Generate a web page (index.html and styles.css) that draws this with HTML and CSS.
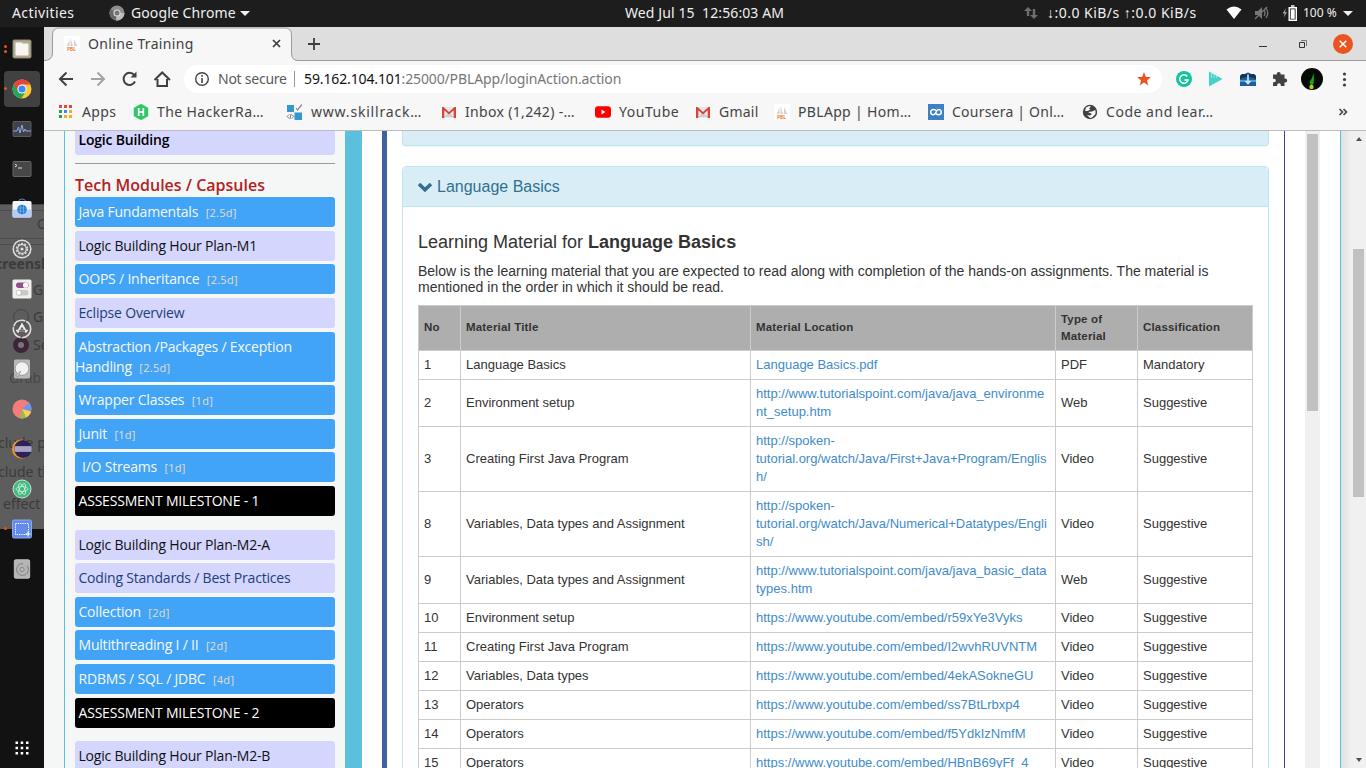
FILE: index.html
```html
<!DOCTYPE html>
<html lang="en">
<head>
<meta charset="utf-8">
<title>Online Training</title>
<link rel="stylesheet" href="styles.css">
</head>
<body>
<svg class="defs" width="0" height="0">
  <symbol id="gmail" viewBox="0 0 16 16"><path d="M1 3h14v11H1z" fill="#e8e8e8"/><path d="M3 13l5-5 5 5z" fill="#d0d0d0"/><path d="M1 3h1.6L8 8l5.4-5H15v11h-2.3V6.2L8 10.6 3.300 6.200V14H1z" fill="#d6453a"/></symbol>
  <symbol id="pbl" viewBox="0 0 16 16"><path d="M0 0h16v16H0z" fill="#fff"/><path d="M2.500 10l3-6v6zM6.500 10V2l2.500 8zM10 10V3l3.500 7z" fill="#d4d4d4"/><text x="3" y="15.300" font-size="4.800" font-weight="700" fill="#f47b35">PBL</text></symbol>
</svg>
<header class="topbar">
  <span class="activities">Activities</span>
  <svg class="tb-chrome" width="16" height="16" viewBox="0 0 16 16"><circle cx="8" cy="8" r="7.500" fill="#8d8d8d"/><path d="M8 8L1.500 4A7.500 7.500 0 0 0 7 15.400z" fill="#686868"/><path d="M8 8h7.500A7.500 7.500 0 0 1 7 15.400z" fill="#bcbcbc"/><circle cx="8" cy="8" r="3.600" fill="#ddd"/><circle cx="8" cy="8" r="2.500" fill="#777"/></svg>
  <span class="appname">Google Chrome</span><i class="caret"></i>
  <span class="clock">Wed Jul 15&nbsp; 12:56:03 AM</span>
  <svg class="net" width="14" height="14" viewBox="0 0 14 14" fill="#6f6f6c"><path d="M4 1l4 4H5.200v5H2.800V5H0zM10 13L6 9h2.800V3h2.400v6H14z"/></svg>
  <span class="speed"><b>↓</b>:0.0 KiB/s <b>↑</b>:0.0 KiB/s</span>
  <svg class="wifi" width="16" height="14" viewBox="0 0 16 14"><path d="M.5 3.500Q8-2.500 15.500 3.500L8 13z" fill="#fff"/></svg>
  <svg class="vol" width="16" height="14" viewBox="0 0 16 14"><path d="M1 5h3l4-4v12L4 9H1z" fill="#777"/><path d="M10 4q2 3 0 6M12 2q3.500 5 0 10M1 13L13 1" fill="none" stroke="#777" stroke-width="1.300"/></svg>
  <svg class="bat" width="16" height="16" viewBox="0 0 16 16"><path d="M4 3L0.500 8.500h2l-.500 4 3-5.500H3z" fill="#999"/><path d="M7.200 2.700h7.100v12.600H7.200zM9 1h3.500" fill="none" stroke="#fff" stroke-width="1.400"/><path d="M8.700 4.300h4v9.500h-4z" fill="#fff"/></svg>
  <span class="pct">100 %</span><i class="caret"></i>
</header>
<div class="desktop">
  <nav class="dock">
    <div class="ghost"><b class="g1">C</b><b class="g2">creensh</b><b class="g3">G</b><b class="g4">G</b><b class="g5">Se</b><b class="g6">Grab</b><b class="g7">clude p</b><b class="g8">clude th</b><b class="g9">effect</b><i class="radio"></i><i class="radio on"></i></div>
    <div class="app two"><svg viewBox="0 0 20 20"><rect x=".5" y=".5" width="19" height="19" rx="2" fill="#8c8671"/><rect x="1.500" y="1.500" width="17" height="17" rx="1" fill="#b2ab96"/><path d="M3.500 4.500q0-1 1-1h5l1 1h5q1 0 1 1v10q0 1-1 1h-11q-1 0-1-1z" fill="#f8f6f1"/></svg></div>
    <div class="app one active"><svg viewBox="0 0 20 20"><circle cx="10" cy="10" r="9.500" fill="#fbc934"/><path d="M10 10L1.800 5.200A9.500 9.500 0 0 0 9.300 19.500L14 12z" fill="#25a65a"/><path d="M10 5.500h8.300A9.500 9.500 0 0 0 1.800 5.200L6 12z" fill="#e5453a"/><circle cx="10" cy="10" r="4.600" fill="#fff"/><circle cx="10" cy="10" r="3.600" fill="#4587f0"/></svg></div>
    <div class="app"><svg viewBox="0 0 20 20"><rect x="1" y="2.500" width="18" height="15" rx="1" fill="#3f4247" stroke="#5a5a5a"/><path d="M1 12h4l1.500-4L8 14l2-8 1.500 7 1.500-3 1 2h5" fill="none" stroke="#8fa9e8"/></svg></div>
    <div class="app"><svg viewBox="0 0 20 20"><rect x="1" y="2.500" width="18" height="15" rx="1" fill="#474747" stroke="#666"/><path d="M3 5l2 1.500L3 8M6 9h4" fill="none" stroke="#ddd"/></svg></div>
    <div class="app"><svg viewBox="0 0 20 20"><path d="M6.500 2.500q0-2.500 3.500-2.500t3.500 2.500" fill="none" stroke="#5c7fcf"/><rect x=".5" y="2" width="19" height="16.500" rx="1.500" fill="#f4f6fb"/><path d="M.5 10.500h19v6.500q0 1.500-1.500 1.500H2q-1.500 0-1.500-1.500z" fill="#b7cbfa"/><circle cx="10" cy="10.500" r="4.800" fill="#2178cf"/><path d="M5.500 9h9M5.500 12h9M8.500 6v9M11.500 6v9" stroke="#77b9f2" stroke-width=".7"/></svg></div>
    <div class="app"><svg viewBox="0 0 20 20"><circle cx="10" cy="10" r="8.800" fill="#636363" stroke="#deded9" stroke-width="1.500"/><circle cx="10" cy="10" r="5.300" fill="none" stroke="#d8d8d8" stroke-width="1.800" stroke-dasharray="2 1.330"/><circle cx="10" cy="10" r="4.300" fill="none" stroke="#d8d8d8" stroke-width="1.200"/><circle cx="10" cy="10" r="1.600" fill="#ddd"/></svg></div>
    <div class="app"><svg viewBox="0 0 20 20"><rect x=".5" y=".5" width="19" height="19" rx="1.500" fill="#efefed"/><rect x="4" y="3.500" width="12.500" height="5.500" rx="2.750" fill="#924d8b"/><circle cx="13.500" cy="6.200" r="2.600" fill="#fff"/><rect x="4" y="11" width="12.500" height="5.500" rx="2.750" fill="#c9c9c7"/><circle cx="6.700" cy="13.700" r="2.600" fill="#fff" stroke="#999" stroke-width=".5"/></svg></div>
    <div class="app"><svg viewBox="0 0 20 20" fill="none"><circle cx="10" cy="10" r="8.700" stroke="#deded9" stroke-width="1.600" stroke-dasharray="14 1"/><path d="M5.500 13.500l4.500-8 4.500 8" stroke="#eee" stroke-width="2"/><path d="M4 11.500h12" stroke="#ddd" stroke-width="1.600"/><path d="M7 11.500h6" stroke="#a35b92"/></svg></div>
    <div class="app"><svg viewBox="0 0 20 20"><rect x="2" y=".5" width="16" height="19" rx="1.500" fill="#b9b9b9"/><circle cx="10" cy="9.500" r="6.800" fill="#f1f1f1" stroke="#888" stroke-width=".7"/><path d="M3.500 17l5-5-2 5z" fill="#eee" stroke="#777" stroke-width=".6"/></svg></div>
    <div class="app"><svg viewBox="0 0 20 20"><circle cx="10" cy="10" r="9.500" fill="#f47d7c"/><path d="M10 10l7-6.400a9.500 9.500 0 0 1 2 9z" fill="#6f95ed"/><path d="M10 10l9 2.600a9.500 9.500 0 0 1-5 6z" fill="#f8d04d"/><path d="M10 10l4 8.600a9.500 9.500 0 0 1-6 .700z" fill="#8cc152"/></svg></div>
    <div class="app"><svg viewBox="0 0 20 20"><circle cx="9.500" cy="10" r="9.500" fill="#f7941e"/><circle cx="11" cy="10" r="9" fill="#2c2255"/><path d="M2.500 7h17v6h-17z" fill="#9d95bb"/><path d="M2 9h18M2 11h18" stroke="#c7c2d9" stroke-width=".6"/></svg></div>
    <div class="app"><svg viewBox="0 0 20 20" fill="none"><circle cx="10" cy="10" r="9" fill="#43b87f" stroke="#c6e5d4"/><g stroke="#c9f3de" stroke-width=".8"><ellipse cx="10" cy="10" rx="6" ry="2.500"/><ellipse cx="10" cy="10" rx="6" ry="2.500" transform="rotate(60 10 10)"/><ellipse cx="10" cy="10" rx="6" ry="2.500" transform="rotate(120 10 10)"/></g></svg></div>
    <div class="app one"><svg viewBox="0 0 20 20"><rect x=".5" y="1" width="19" height="18" rx="1.500" fill="#648bea" stroke="#89a7f2"/><rect x="3.500" y="4.500" width="13" height="11" fill="none" stroke="#fff" stroke-dasharray="1.300 1"/><path d="M16 12.500v5M13.500 15h5" stroke="#fff"/></svg></div>
    <div class="app"><svg viewBox="0 0 20 20"><rect x="2.300" y=".7" width="15.400" height="18.600" rx="1.500" fill="#b5b5b5" stroke="#ddd" stroke-width=".7"/><path d="M15 6.500A6 6 0 1 1 11 4.500" fill="none" stroke="#808080"/><circle cx="10" cy="10.500" r="2.200" fill="none" stroke="#8a8a8a"/></svg></div>
    <svg class="grid" viewBox="0 0 14 14" fill="#fff"><path d="M.5.5h2.500v2.500H.5zM5.700.5h2.500v2.500H5.700zM11 .5h2.500v2.500H11zM.5 5.700h2.500v2.500H.5zM5.700 5.700h2.500v2.500H5.700zM11 5.700h2.500v2.500H11zM.5 11h2.500v2.500H.5zM5.700 11h2.500v2.500H5.700zM11 11h2.500v2.500H11z"/></svg>
  </nav>
  <main class="browser">
    <div class="tabs">
      <svg class="tabshape" width="254" height="35" viewBox="0 0 254 35"><path d="M0 33.500Q8.500 33.500 8.500 26V8Q8.500 1 15 1H241Q247.500 1 247.500 8V26Q247.500 33.500 254 33.500V35H0z" fill="#f7f7f7" stroke="#9b9b9b"/><path d="M0 34h254v1H0z" fill="#f7f7f7"/></svg>
      <svg class="fav" width="16" height="16"><use href="#pbl"/></svg><span class="tabtitle">Online Training</span>
      <svg class="tabx" width="9" height="9" viewBox="0 0 9 9"><path d="M1 1l7 7M8 1L1 8" stroke="#3c3c3c" stroke-width="1.700"/></svg>
      <svg class="plus" width="12" height="12" viewBox="0 0 12 12"><path d="M6 0v12M0 6h12" stroke="#3c3c3c" stroke-width="1.800"/></svg>
      <svg class="win" width="94" height="20" viewBox="0 0 94 20" fill="none"><path d="M0 12.500h8" stroke="#333"/><path d="M40.500 8.500h5v5h-5z" stroke="#333"/><path d="M42 6.500h5.500V12" stroke="#777"/><circle cx="84" cy="10" r="10" fill="#e95420" /><path d="M80.700 6.700l6.600 6.600M87.300 6.700l-6.600 6.600" stroke="#fff" stroke-width="1.500"/></svg>
    </div>
    <div class="toolbar">
      <svg class="navi" width="116" height="18" viewBox="0 0 116 18" fill="none" stroke="#404040" stroke-width="2"><path d="M15 9H2M8.500 2.500L2 9l6.500 6.500"/><path d="M33 9h13M39.500 2.500L46 9l-6.500 6.500" stroke="#a3a3a3"/><path d="M77 11.500A6 6 0 1 1 76.200 5"/><path d="M78.500 1.500v6h-6z" fill="#404040" stroke="none"/><path d="M99.500 9v7h9.500V9M96.500 10L104.200 2.500 112 10"/></svg>
      <div class="omni">
        <svg width="14" height="14" viewBox="0 0 14 14" fill="none"><circle cx="7" cy="7" r="6.300" stroke="#444" stroke-width="1.400"/><path d="M7 6v5M7 3v1.700" stroke="#444" stroke-width="1.600"/></svg>
        <span class="insecure">Not secure</span><i class="sep"></i><span class="url"><b>59.162.104.101</b>:25000/PBLApp/loginAction.action</span>
        <svg class="star" width="14" height="14" viewBox="0 0 14 14"><path d="M7 0l1.900 4.900 5.100.200-4 3.300 1.300 5.100L7 10.600l-4.300 2.900L4 8.400 0 5.100l5.100-.200z" fill="#ea5421"/></svg>
      </div>
      <svg class="ext" width="184" height="24" viewBox="0 0 184 24">
        <circle cx="14" cy="12" r="8" fill="#15c39a"/><path d="M17.300 9.500A4.200 4.200 0 1 0 18 13h-3.500" fill="none" stroke="#fff" stroke-width="1.500"/>
        <path d="M39 4.500L52.500 12 39 19.500z" fill="#45d0ca"/><path d="M41.500 4v7M44 5v6M46.500 6v5" stroke="#c9f4f1" stroke-width=".6"/>
        <path d="M70 9l2-2h3q3-3 6 0h3l2 2v10H70z" fill="#1e5c9e"/><path d="M70 12q8-4 16 0v-3l-2-2H72l-2 2z" fill="#173452"/><path d="M70 13h16v2H70z" fill="#4aa0dc"/><path d="M78 7.500v9m-2.500-2.500l2.500 2.500 2.500-2.500" stroke="#cfeaff" stroke-width="1.600" fill="none"/>
        <path d="M103 7.500h3.700V7a2 2 0 0 1 4 0v.5h3.800v4h.7a2 2 0 0 1 0 4h-.7V19h-3.700v-1a1.800 1.800 0 0 0-3.600 0v1H103v-3.700h1a1.800 1.800 0 0 0 0-3.600h-1z" fill="#424242"/>
        <circle cx="142" cy="12" r="11" fill="#050a05"/><path d="M143.500 6l-1.500 5-2.500 4 1.500 4 2.500-2 .500-5z" fill="#17a31b"/><circle cx="141.500" cy="20" r="2.200" fill="#b9c31e"/>
        <g fill="#404040"><circle cx="174.500" cy="7" r="1.600"/><circle cx="174.500" cy="12.500" r="1.600"/><circle cx="174.500" cy="18" r="1.600"/></g>
      </svg>
    </div>
    <div class="bookmarks">
      <a><svg viewBox="0 0 16 16"><path d="M1 1h3v3H1zM6 1h3v3H6zM11 1h3v3h-3z" fill="#e8453c"/><path d="M1 6h3v3H1zM1 11h3v3H1z" fill="#2a9c56"/><path d="M6 6h3v3H6z" fill="#3e83ee"/><path d="M11 6h3v3h-3zM6 11h3v3H6zM11 11h3v3h-3z" fill="#f5ae1b"/></svg><span class="s4">Apps</span></a>
      <a><svg viewBox="0 0 16 16"><path d="M8 0l7 4v8l-7 4-7-4V4z" fill="#2ec866" stroke="#2ec866" stroke-width=".5"/><path d="M5.700 4v8M10.300 4v8M5.700 8h4.600" stroke="#fff" stroke-width="1.700"/></svg><span class="s4">The HackerRa…</span></a>
      <a><svg viewBox="0 0 16 16"><path d="M1 1h7v7H1zM8.500 8.500H16V16H8.500z" fill="#3498ce"/><path d="M10 4l1.500 2L16 .5" fill="none" stroke="#888" stroke-width="1.200"/><path d="M3 10.500l-1.800 2 1.800 2M6 10.500l1.800 2-1.800 2M5 10l-1 5" fill="none" stroke="#777"/></svg><span class="s9">www.skillrack…</span></a>
      <a><svg><use href="#gmail"/></svg><span class="s3">Inbox (1,242) -…</span></a>
      <a><svg viewBox="0 0 16 16"><rect y="2.300" width="16" height="11.500" rx="3" fill="#f00"/><path d="M6.500 5.500v5l4-2.500z" fill="#fff"/></svg><span class="s5">YouTube</span></a>
      <a><svg><use href="#gmail"/></svg><span class="s2">Gmail</span></a>
      <a><svg><use href="#pbl"/></svg><span class="s3">PBLApp | Hom…</span></a>
      <a><svg viewBox="0 0 16 16"><path d="M0 0h16v16H0z" fill="#3d80c3"/><path d="M8.700 6.800Q7.300 5.500 5.300 5.500a2.600 2.600 0 0 0 0 5.200C8 10.700 8 5.500 10.700 5.500a2.600 2.600 0 0 1 0 5.200Q9 10.700 7.600 9.400" fill="none" stroke="#fff" stroke-width="1.500"/></svg><span class="s2">Coursera | Onl…</span></a>
      <a><svg viewBox="0 0 16 16"><circle cx="8" cy="8" r="7.200" fill="#414141"/><path d="M4 3.500l3-1.500 2 .5-2 2 1.500 1-3 1.500-2.500 0zM6 8l4-.5 3.500-1.500v4L10 13.500l-2 .5-3-3 3 .5 2-1.500z" fill="#f7f7f7"/></svg><span class="s5">Code and lear…</span></a>
      <a class="more"><svg viewBox="0 0 16 16"><path d="M4.500 5l3 3-3 3M8.500 5l3 3-3 3" fill="none" stroke="#404040" stroke-width="1.600"/></svg></a>
    </div>
    <div class="page">
      <aside class="side">
        <div class="item logic first">Logic Building</div>
        <hr>
        <h3>Tech Modules / Capsules</h3>
        <div class="list">
          <div class="item mod">Java Fundamentals <small>[2.5d]</small></div>
          <div class="item logic">Logic Building Hour Plan-M1</div>
          <div class="item mod">OOPS / Inheritance <small>[2.5d]</small></div>
          <div class="item logic link">Eclipse Overview</div>
          <div class="item mod tall">Abstraction /Packages / Exception<br>Handling <small>[2.5d]</small></div>
          <div class="item mod">Wrapper Classes <small>[1d]</small></div>
          <div class="item mod">Junit <small>[1d]</small></div>
          <div class="item mod">&nbsp;I/O Streams <small>[1d]</small></div>
          <div class="item mile">ASSESSMENT MILESTONE - 1</div>
          <div class="item logic">Logic Building Hour Plan-M2-A</div>
          <div class="item logic link">Coding Standards / Best Practices</div>
          <div class="item mod">Collection <small>[2d]</small></div>
          <div class="item mod">Multithreading I / II <small>[2d]</small></div>
          <div class="item mod">RDBMS / SQL / JDBC <small>[4d]</small></div>
          <div class="item mile">ASSESSMENT MILESTONE - 2</div>
          <div class="item logic">Logic Building Hour Plan-M2-B</div>
        </div>
      </aside>
      <div class="gutter"></div>
      <section class="content">
        <div class="prev"></div>
        <div class="panel">
          <div class="phead"><svg width="16" height="16" viewBox="0 0 16 16"><path d="M2 5l6 5.700L14 5" fill="none" stroke="#31708f" stroke-width="3.600"/></svg>Language Basics</div>
          <div class="pbody">
            <h4>Learning Material for <b>Language Basics</b></h4>
            <p>Below is the learning material that you are expected to read along with completion of the hands-on assignments. The material is<br>mentioned in the order in which it should be read.</p>
            <table>
              <colgroup><col class="c1"><col class="c2"><col class="c3"><col class="c4"><col class="c5"></colgroup>
              <tr><th>No</th><th>Material Title</th><th>Material Location</th><th class="two-line">Type of Material</th><th>Classification</th></tr>
              <tr><td>1</td><td>Language Basics</td><td><a>Language Basics.pdf</a></td><td>PDF</td><td>Mandatory</td></tr>
              <tr><td>2</td><td>Environment setup</td><td><a>http://www.tutorialspoint.com/java/java_environme<br>nt_setup.htm</a></td><td>Web</td><td>Suggestive</td></tr>
              <tr><td>3</td><td>Creating First Java Program</td><td><a>http://spoken-<br>tutorial.org/watch/Java/First+Java+Program/Englis<br>h/</a></td><td>Video</td><td>Suggestive</td></tr>
              <tr><td>8</td><td>Variables, Data types and Assignment</td><td><a>http://spoken-<br>tutorial.org/watch/Java/Numerical+Datatypes/Engli<br>sh/</a></td><td>Video</td><td>Suggestive</td></tr>
              <tr><td>9</td><td>Variables, Data types and Assignment</td><td><a>http://www.tutorialspoint.com/java/java_basic_data<br>types.htm</a></td><td>Web</td><td>Suggestive</td></tr>
              <tr><td>10</td><td>Environment setup</td><td><a>https://www.youtube.com/embed/r59xYe3Vyks</a></td><td>Video</td><td>Suggestive</td></tr>
              <tr><td>11</td><td>Creating First Java Program</td><td><a>https://www.youtube.com/embed/I2wvhRUVNTM</a></td><td>Video</td><td>Suggestive</td></tr>
              <tr><td>12</td><td>Variables, Data types</td><td><a>https://www.youtube.com/embed/4ekASokneGU</a></td><td>Video</td><td>Suggestive</td></tr>
              <tr><td>13</td><td>Operators</td><td><a>https://www.youtube.com/embed/ss7BtLrbxp4</a></td><td>Video</td><td>Suggestive</td></tr>
              <tr><td>14</td><td>Operators</td><td><a>https://www.youtube.com/embed/f5YdkIzNmfM</a></td><td>Video</td><td>Suggestive</td></tr>
              <tr><td>15</td><td>Operators</td><td><a>https://www.youtube.com/embed/HBnB69yFf_4</a></td><td>Video</td><td>Suggestive</td></tr>
            </table>
          </div>
        </div>
      </section>
      <div class="inner-scroll"><i></i></div>
      <div class="edge"></div>
      <div class="outer-scroll"><i class="up"></i><i class="thumb"></i><i class="down"></i></div>
    </div>
  </main>
</div>
</body>
</html>
```
FILE: styles.css
```css
* { box-sizing: border-box; }
body { margin: 0; width: 1366px; height: 768px; overflow: hidden; background: #fff; font-family: "Noto Sans", "Open Sans", sans-serif; }
svg { display: block; flex: none; }
.defs { position: absolute; }

.topbar { height: 27px; background: #1d1d1d; color: #f0f0f0; display: flex; align-items: center; font-size: 14px; white-space: nowrap; padding: 0 0 1px 12px; line-height: 24px; }
.topbar span { flex: none; }
.activities { width: 97px; letter-spacing: .4px; }
.appname { width: 109px; margin-left: 6px; letter-spacing: .1px; }
.caret { border: 5px solid transparent; border-top-color: #f0f0f0; border-bottom: 0; }
.clock { margin-left: 375px; width: 399px; letter-spacing: .1px; }
.speed { margin-left: 9px; width: 179px; letter-spacing: .48px; }
.vol { margin-left: 12px; }
.bat { margin-left: 12px; }
.pct { width: 40px; margin-left: 5px; font-size: 12px; }

.desktop { display: flex; height: 741px; }
.dock { width: 44px; flex: none; background: linear-gradient(#131313 177px, #5d5d5d 177px, #5d5d5d 502px, #121212 502px); position: relative; padding-top: 2px; overflow: hidden; display: flex; flex-direction: column; }
.app { height: 40px; flex: none; display: flex; align-items: center; justify-content: center; position: relative; z-index: 1; }
.app svg { width: 20px; height: 20px; overflow: visible; }
.app.active::after { content: ""; position: absolute; inset: 2px 4px; background: #414141; border-radius: 4px; z-index: -1; }
.one::before, .two::before { content: ""; position: absolute; left: 4px; top: 18px; width: 3px; height: 3px; border-radius: 50%; background: #e95420; }
.two::before { top: 16px; box-shadow: 0 5px #e95420; }
.grid { width: 14px; height: 14px; margin: 152px 0 0 15px; }
.ghost { position: absolute; inset: 177px 0 239px; border-top: 1px solid #444; background: linear-gradient(transparent 5px, #4d4d4d 5px, #4d4d4d 6px, transparent 6px, transparent 33px, #4d4d4d 33px, #4d4d4d 34px, transparent 34px, transparent 39px, #4d4d4d 39px, #4d4d4d 40px, transparent 40px); color: #3b3b3b; font-size: 14px; overflow: hidden; }
.ghost b { position: absolute; font-weight: 400; line-height: 18px; white-space: nowrap; }
.g1 { left: 37px; top: 10px; }
.ghost .g2 { left: -5px; top: 50px; font-weight: 700; }
.g3 { left: 33px; top: 76px; }
.g4 { left: 33px; top: 103px; }
.g5 { left: 33px; top: 131px; }
.g6 { left: 9px; top: 164px; opacity: .6; }
.g7 { left: -2px; top: 229px; }
.g8 { left: -2px; top: 258px; }
.g9 { left: 3px; top: 290px; }
.radio { position: absolute; left: 13px; top: 104px; width: 16px; height: 16px; border: 1px solid #444; border-radius: 50%; }
.radio.on { top: 132px; border: 5px solid #3d2539; background: #777; }

.browser { flex: 1; display: flex; flex-direction: column; min-width: 0; }
.tabs { height: 34px; background: #dedede; border-bottom: 1px solid #9b9b9b; position: relative; display: flex; align-items: center; padding-left: 20px; }
.tabshape { position: absolute; left: 0; top: 0; }
.tabs > * { z-index: 1; }
.tabs .tabshape { z-index: 0; }
.tabtitle { width: 184px; margin-left: 8px; font-size: 14px; color: #3f3f3f; letter-spacing: .34px; }
.tabx { flex: none; }
.plus { margin-left: 27px; }
.win { margin-left: 939px; }
.toolbar { height: 35px; background: #f7f7f7; display: flex; align-items: center; padding: 0 0 0 14px; }
.omni { margin-left: 10px; width: 978px; height: 28px; border-radius: 14px; background: #fff; display: flex; align-items: center; padding-left: 11px; font-size: 14px; white-space: nowrap; }
.insecure { margin-left: 9px; width: 76px; color: #5a5a5a; letter-spacing: -.25px; }
.sep { width: 1px; height: 16px; background: #999; margin-right: 9px; }
.url { color: #777; width: 833px; letter-spacing: -.13px; }
.url b { color: #111; font-weight: 400; }
.ext { margin-left: 8px; }
.bookmarks { height: 35px; background: #f7f7f7; border-bottom: 1px solid #bcbcbc; display: grid; grid-template-columns: 75px 153px 155px 154px 100px 79px 154px 154px 253px 20px; padding: 0 0 2px 14px; align-items: center; font-size: 14px; color: #444; white-space: nowrap; }
.bookmarks a { display: flex; align-items: center; line-height: 30px; }
.bookmarks a svg { width: 16px; height: 16px; margin-right: 8px; }
.s2 { letter-spacing: .22px; }
.s3 { letter-spacing: .33px; }
.s4 { letter-spacing: .4px; }
.s5 { letter-spacing: .53px; }
.s9 { letter-spacing: .8px; margin-left: 1px; }

.page { height: 637px; flex: none; display: flex; background: #fff; overflow: hidden; }
.side { width: 301px; flex: none; background: linear-gradient(90deg, transparent 20px, #5bc0de 20px, #5bc0de 21px, transparent 21px) #f5f7f6; padding: 0 10px 0 31px; font-family: "Open Sans", "Noto Sans", sans-serif; }
.item { height: 30px; border-radius: 3px; font-size: 14px; line-height: 30px; padding-left: 3.500px; white-space: nowrap; flex: none; letter-spacing: -.2px; }
.logic { background: #d4d6fe; color: #111; }
.logic.link { color: #1d3f77; }
.mod { background: #42a4f7; color: #f5f8fb; }
.mod small { font-size: 11px; color: #e4dccd; margin-left: 4px; letter-spacing: .28px; }
.tall { height: 50px; line-height: 20px; padding: 5px 0 0; text-indent: 3.500px; }
.mile { background: #000; color: #fff; }
.mile + .logic { margin-top: 10.250px; }
.first { height: 24px; line-height: 18px; font-weight: 600; color: #000; border-radius: 0 0 3px 3px; }
.side hr { border: 0; border-top: 1px solid #999; margin: 8px 0 0; }
.side h3 { margin: 10px 0 0; height: 23.200px; font-size: 16px; line-height: 22px; font-weight: 600; color: #b22222; white-space: nowrap; }
.list { display: flex; flex-direction: column; gap: 3.580px; }
.gutter { width: 42px; flex: none; background: linear-gradient(90deg, #5bc0de 17px, #fff 17px, #fff 37px, #3f619d 37px); }
.content { width: 898px; flex: none; padding: 0 15px; border-right: 1px solid #483d8b; font-family: "Liberation Sans", Arial, sans-serif; color: #333; }
.prev { width: 867px; height: 15px; background: #d9edf7; border: 1px solid #bce8f1; border-top: 0; border-radius: 0 0 4px 4px; box-shadow: 0 1px 1px rgba(0,0,0,.05); }
.panel { margin-top: 20px; border: 1px solid #bce8f1; border-radius: 4px; width: 867px; height: 700px; }
.phead { height: 40px; background: #d9edf7; border-bottom: 1px solid #bce8f1; border-radius: 3px 3px 0 0; display: flex; align-items: center; padding-left: 14px; font-size: 16px; color: #31708f; gap: 4px; }
.pbody { padding: 0 15px; }
h4 { margin: 25px 0 0; font-size: 18px; line-height: 20px; font-weight: 400; }
p { margin: 11px 0 10px; font-size: 14px; line-height: 16px; white-space: nowrap; }
table { border-collapse: collapse; table-layout: fixed; width: 835px; font-size: 13px; line-height: 18px; }
.c1 { width: 42px; }
.c2 { width: 290px; }
.c3 { width: 305px; }
.c4 { width: 82px; }
.c5 { width: 115px; }
th, td { border: 1px solid #ccc; padding: 5px; text-align: left; vertical-align: middle; }
td { white-space: nowrap; }
th { background: #aeaeae; font-size: 11.500px; line-height: 17px; letter-spacing: .17px; padding-bottom: 6px; }
th.two-line { padding-bottom: 5px; }
table a { color: #428bca; }
.inner-scroll { width: 15px; flex: none; margin-left: 20px; background: #f0f0f0; padding: 3px 2px; }
.inner-scroll i { display: block; height: 277px; background: #c1c1c1; }
.edge { width: 31px; flex: none; background: linear-gradient(90deg, #fff 20px, #5bc0de 20px, #5bc0de 21px, transparent 21px), linear-gradient(90deg, #dde1df 21px, #eff1f0 31px); }
.outer-scroll { width: 15px; flex: none; background: #f0f0f0; display: flex; flex-direction: column; align-items: center; }
.outer-scroll i { flex: none; }
.up { margin-top: 6px; border: 3.500px solid transparent; border-top: 0; border-bottom: 4px solid #505050; }
.thumb { width: 11px; height: 248px; background: #c1c1c1; margin-top: 108px; }
.down { margin-top: 261px; border: 3.500px solid transparent; border-bottom: 0; border-top: 4px solid #505050; }
```
